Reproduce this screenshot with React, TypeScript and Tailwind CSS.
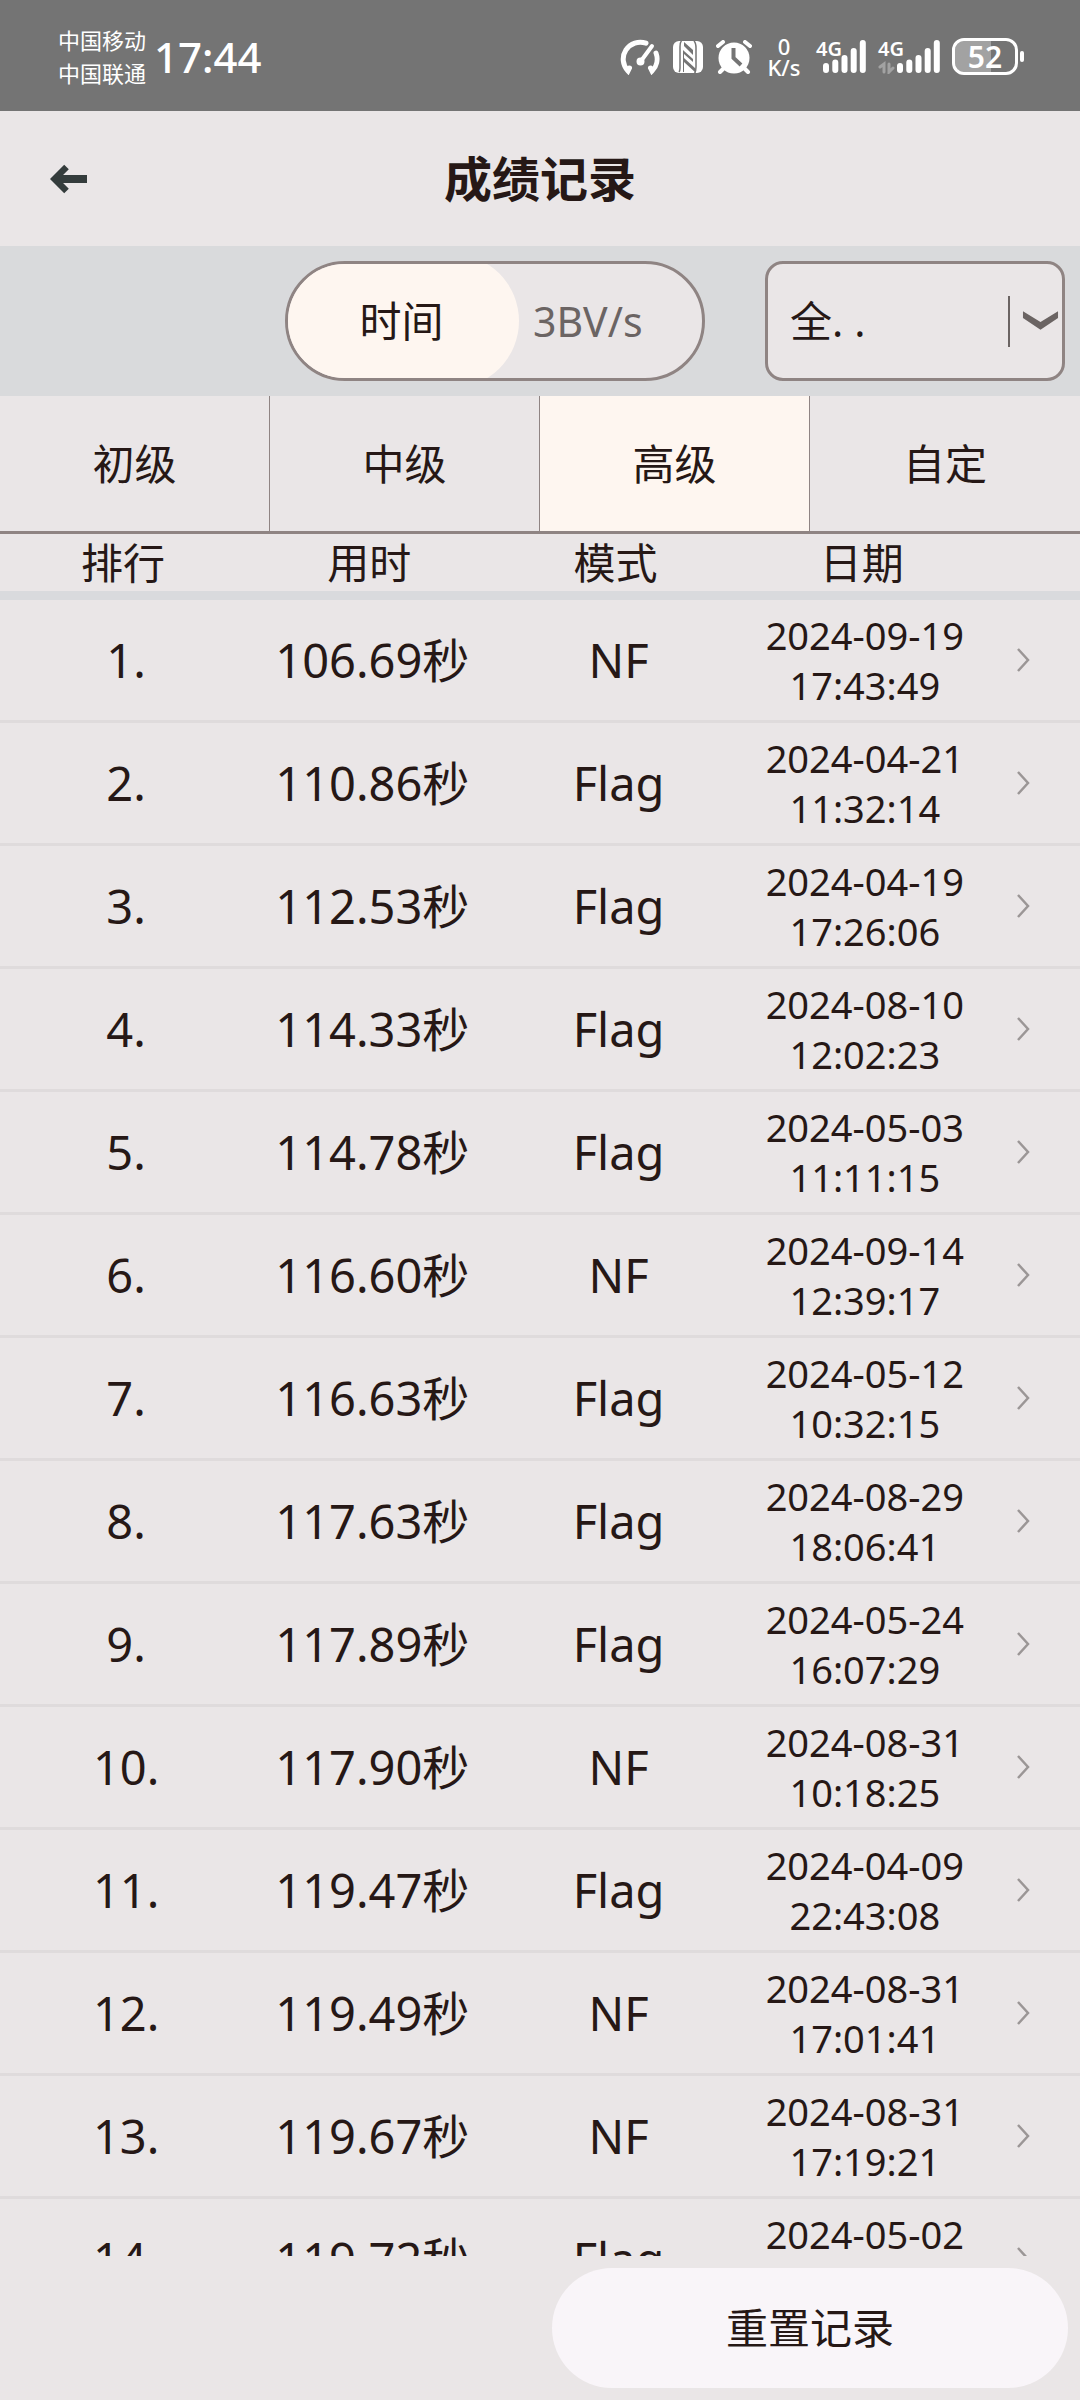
import { useState } from "react";
import clsx from "clsx";

type GameRecord = {
  time: string;
  mode: "NF" | "Flag";
  date: string;
  clock: string;
};

const records: GameRecord[] = [
  { time: "106.69", mode: "NF", date: "2024-09-19", clock: "17:43:49" },
  { time: "110.86", mode: "Flag", date: "2024-04-21", clock: "11:32:14" },
  { time: "112.53", mode: "Flag", date: "2024-04-19", clock: "17:26:06" },
  { time: "114.33", mode: "Flag", date: "2024-08-10", clock: "12:02:23" },
  { time: "114.78", mode: "Flag", date: "2024-05-03", clock: "11:11:15" },
  { time: "116.60", mode: "NF", date: "2024-09-14", clock: "12:39:17" },
  { time: "116.63", mode: "Flag", date: "2024-05-12", clock: "10:32:15" },
  { time: "117.63", mode: "Flag", date: "2024-08-29", clock: "18:06:41" },
  { time: "117.89", mode: "Flag", date: "2024-05-24", clock: "16:07:29" },
  { time: "117.90", mode: "NF", date: "2024-08-31", clock: "10:18:25" },
  { time: "119.47", mode: "Flag", date: "2024-04-09", clock: "22:43:08" },
  { time: "119.49", mode: "NF", date: "2024-08-31", clock: "17:01:41" },
  { time: "119.67", mode: "NF", date: "2024-08-31", clock: "17:19:21" },
  { time: "119.72", mode: "Flag", date: "2024-05-02", clock: "20:15:36" },
];

const levels = ["初级", "中级", "高级", "自定"];

const SpeedIcon = () => (
  <svg width="40" height="36" viewBox="0 0 40 36" fill="none" stroke="white" strokeWidth="5" strokeLinecap="round" aria-hidden="true">
    <path d="M26 4.2A17 17 0 0 0 8 32L9.5 29" />
    <path d="M36 14A17 17 0 0 1 32 32L30.500 29" />
    <path d="M21 22L32 7" strokeWidth="4" />
    <circle cx="20.500" cy="22.500" r="2" fill="white" strokeWidth="4" />
  </svg>
);

const NfcIcon = () => (
  <svg width="32" height="34" viewBox="0 0 32 34" aria-hidden="true">
    <rect x="1" y="1" width="30" height="32" rx="6" fill="white" />
    <g fill="none" stroke="#747474">
      <path d="M10 0C8 2 8 4 8 7V28C8 30 8 31 7 32" strokeWidth="1.500" />
      <path d="M22 1C24 3 24 5 24 8V27C24 30 24 32 22 34" strokeWidth="1.500" />
    </g>
    <g fill="#747474">
      <path d="M12 2L21 10V15L12 6Z" />
      <path d="M12 11L21 19V22L12 14V32H11V10Z" />
      <path d="M12 18L24 29V33L12 22Z" />
    </g>
  </svg>
);

const AlarmIcon = () => (
  <svg width="36" height="34" viewBox="0 0 36 34" aria-hidden="true">
    <circle cx="18" cy="18" r="15.500" fill="white" />
    <g stroke="white" strokeWidth="4" strokeLinecap="round">
      <path d="M2 6L7 2" />
      <path d="M34 6L29 2" />
      <path d="M8 28L4 32" />
      <path d="M28 28L32 32" />
    </g>
    <path d="M17.500 8V18L25 25" fill="none" stroke="#747474" strokeWidth="4" />
  </svg>
);

const Signal = ({ idle = false }: { idle?: boolean }) => (
  <div className="relative">
    <svg
      width={idle ? 62 : 50}
      height="34"
      viewBox={idle ? "-12 0 62 34" : "0 0 50 34"}
      stroke="white"
      strokeWidth="6"
      strokeLinecap="round"
      aria-hidden="true"
    >
      <path d="M10 26V30M19.300 22.500V30M28.500 18V30M37.700 11V30M46.800 3V30" />
      {idle && (
        <path d="M-10 27L-6 24V32M-1 24V32L3 28" fill="none" stroke="#a2a2a2" strokeWidth="3" />
      )}
    </svg>
    <span className="absolute left-0 top-0 text-[20px] leading-[17px] font-semibold">4G</span>
  </div>
);

const StatusBar = () => (
  <div className="flex h-[111px] shrink-0 items-center justify-between bg-[#747474] pt-0.5 pr-14 pl-[58px] text-white">
    <div className="flex items-center gap-2">
      <div className="text-[22px] leading-[33px]">
        <p>中国移动</p>
        <p>中国联通</p>
      </div>
      <span className="text-[42px] leading-[60px] font-medium">17:44</span>
    </div>
    <div className="flex items-center gap-3">
      <SpeedIcon />
      <NfcIcon />
      <AlarmIcon />
      <div className="w-10 text-center text-[22px] leading-[21px] font-medium">
        <p>0</p>
        <p>K/s</p>
      </div>
      <Signal />
      <Signal idle />
      <div className="flex items-center gap-0.5">
        <div className="h-[37px] w-[66px] rounded-[12px] border-[3px] border-white bg-linear-to-r from-[#a2a2a2] from-60% to-[#747474] to-60% bg-clip-padding text-center text-[30px] leading-[31px] font-semibold">
          52
        </div>
        <span className="h-[11px] w-1 rounded-full bg-white" />
      </div>
    </div>
  </div>
);

const Header = () => (
  <header className="grid h-[135px] shrink-0 grid-cols-[1fr_auto_1fr] items-center">
    <button type="button" aria-label="返回" className="ml-[50px] w-[38px]">
      <svg width="38" height="30" viewBox="0 0 38 30" fill="none" stroke="#343c3c" aria-hidden="true">
        <path d="M16.500 3L4.500 15L16.500 27" strokeWidth="6.500" />
        <path d="M5 15H37" strokeWidth="8" />
      </svg>
    </button>
    <h1 className="text-[48px] leading-[60px] font-bold">成绩记录</h1>
  </header>
);

const Toolbar = () => {
  const [sort, setSort] = useState("time");

  return (
    <div className="flex shrink-0 justify-end gap-[60px] bg-[#d9dadc] py-[15px] pr-[15px] text-[42px] leading-[60px]">
      <div className="flex h-[120px] w-[420px] items-center overflow-hidden rounded-full border-[3px] border-[#8f8483] bg-[#eae6e7]">
        <button
          type="button"
          onClick={() => setSort("time")}
          className={clsx(
            "h-[134px] w-[231px] shrink-0 rounded-r-[67px] pr-1",
            sort === "time" ? "bg-[#fef6f0]" : "text-[#6b6463]"
          )}
        >
          时间
        </button>
        <button
          type="button"
          onClick={() => setSort("3bv")}
          className={clsx(
            "h-[134px] grow rounded-l-[67px] pl-[14px] text-left text-[41px]",
            sort === "3bv" ? "bg-[#fef6f0]" : "text-[#6b6463]"
          )}
        >
          3BV/s
        </button>
      </div>
      <div className="relative">
        <select
          aria-label="筛选"
          className="h-[120px] w-[300px] appearance-none rounded-[18px] border-[3px] border-[#8f8483] bg-[#eae6e7] pl-[22px]"
        >
          <option>全. .</option>
        </select>
        <div className="pointer-events-none absolute inset-y-0 right-1.5 flex items-center gap-3">
          <span className="h-[51px] w-0.5 bg-[#6b6463]" />
          <svg width="37" height="20" viewBox="0 0 38 20" fill="#6b6463" aria-hidden="true">
            <path d="M1 0L19 11L37 0V7L19 19L1 7Z" />
          </svg>
        </div>
      </div>
    </div>
  );
};

const LevelTabs = () => {
  const [level, setLevel] = useState("高级");

  return (
    <nav className="grid h-[138px] shrink-0 grid-cols-4 border-b-[3px] border-[#8f8483]">
      {levels.map((name) => (
        <button
          key={name}
          type="button"
          onClick={() => setLevel(name)}
          className={clsx(
            "border-r border-[#8f8483] text-[42px] leading-[60px] last:border-r-0",
            name === level && "bg-[#fef6f0]"
          )}
        >
          {name}
        </button>
      ))}
    </nav>
  );
};

const RecordTable = () => (
  <div className="min-h-0 flex-1 overflow-hidden">
    <table className="w-full table-fixed border-separate border-spacing-0 text-center">
      <colgroup>
        <col className="w-[22.8%]" />
        <col className="w-[22.8%]" />
        <col className="w-[22.8%]" />
        <col className="w-[22.8%]" />
        <col />
      </colgroup>
      <thead>
        <tr className="h-[66px] text-[42px] leading-[57px] *:border-b-[9px] *:border-[#d9dadd] *:p-0 *:font-normal">
          <th>排行</th>
          <th>用时</th>
          <th>模式</th>
          <th>日期</th>
          <th />
        </tr>
      </thead>
      <tbody>
        {records.map((record, i) => (
          <tr
            key={record.time}
            className="h-[123px] text-[47px] leading-[60px] *:border-b-[3px] *:border-[#dfdbdc] *:py-0 *:pr-0 *:pl-1.5"
          >
            <td>{i + 1}.</td>
            <td>{record.time}秒</td>
            <td>{record.mode}</td>
            <td className="text-[38px] leading-[50px]">
              <p>{record.date}</p>
              <p>{record.clock}</p>
            </td>
            <td>
              <button type="button" aria-label="查看详情" className="ml-[26px] block">
                <svg width="13" height="24" viewBox="0 0 13 24" fill="none" stroke="#9b9696" strokeWidth="2.500" aria-hidden="true">
                  <path d="M1 1L11 12L1 23" />
                </svg>
              </button>
            </td>
          </tr>
        ))}
      </tbody>
    </table>
  </div>
);

export default function App() {
  return (
    <div className="flex h-screen flex-col bg-[#eae6e7] font-['Noto_Sans','Noto_Sans_CJK_SC',sans-serif] text-[#261816]">
      <StatusBar />
      <Header />
      <Toolbar />
      <LevelTabs />
      <RecordTable />
      <footer className="flex shrink-0 justify-end p-3">
        <button type="button" className="h-[120px] w-[516px] rounded-full bg-[#f9f5f9] text-[42px] leading-[60px]">
          重置记录
        </button>
      </footer>
    </div>
  );
}
